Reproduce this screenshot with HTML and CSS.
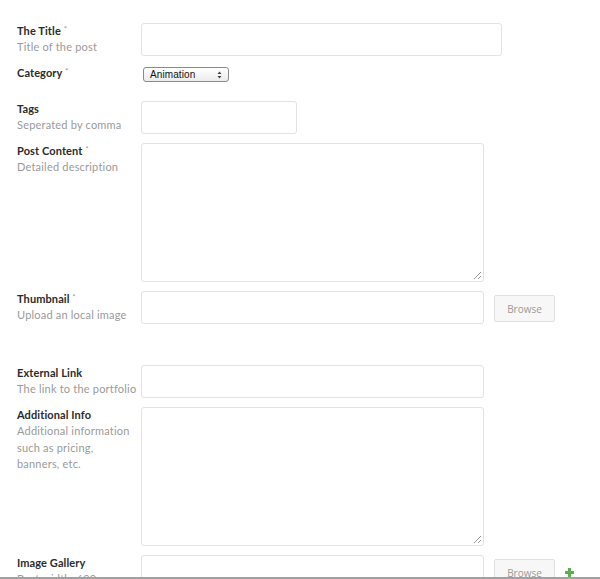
FILE: index.html
```html
<!DOCTYPE html>
<html>
<head>
<meta charset="utf-8">
<link rel="stylesheet" href="styles.css">
</head>
<body>
<form class="form">
  <div class="row">
    <div class="lbl"><div class="name">The Title <span class="req">*</span></div><div class="desc">Title of the post</div></div>
    <div class="field"><div class="input w-title"></div></div>
  </div>
  <div class="row row-cat">
    <div class="lbl"><div class="name">Category <span class="req">*</span></div></div>
    <div class="field"><div class="select"><span class="sel-text">Animation</span><svg class="arrows" width="5" height="8" viewBox="0 0 5 8"><path d="M2.5 0.5 L4.5 3 L0.5 3 Z M0.5 5 L4.5 5 L2.5 7.5 Z" fill="#444"/></svg></div></div>
  </div>
  <div class="row">
    <div class="lbl"><div class="name">Tags</div><div class="desc">Seperated by comma</div></div>
    <div class="field"><div class="input w-tags"></div></div>
  </div>
  <div class="row">
    <div class="lbl"><div class="name">Post Content <span class="req">*</span></div><div class="desc">Detailed description</div></div>
    <div class="field"><div class="input textarea"><span class="grip"></span></div></div>
  </div>
  <div class="row row-gap">
    <div class="lbl"><div class="name">Thumbnail <span class="req">*</span></div><div class="desc">Upload an local image</div></div>
    <div class="field"><div class="input w-main"></div><div class="btn">Browse</div></div>
  </div>
  <div class="row">
    <div class="lbl"><div class="name">External Link</div><div class="desc">The link to the portfolio</div></div>
    <div class="field"><div class="input w-main"></div></div>
  </div>
  <div class="row">
    <div class="lbl"><div class="name">Additional Info</div><div class="desc">Additional information<br>such as pricing,<br>banners, etc.</div></div>
    <div class="field"><div class="input textarea"><span class="grip"></span></div></div>
  </div>
  <div class="row">
    <div class="lbl"><div class="name">Image Gallery</div><div class="desc">Best width: 600px</div></div>
    <div class="field"><div class="input w-main"></div><div class="btn">Browse</div><span class="plus"></span></div>
  </div>
</form>
<div class="edge"></div>
</body>
</html>
```
FILE: styles.css
```css
html, body {
  margin: 0;
  padding: 0;
  background: #fff;
  overflow: hidden;
  height: 579px;
}
body {
  font-family: "Lato", "Open Sans", sans-serif;
  color: #333;
}
.form {
  padding: 23px 0 0 17px;
}
.row {
  display: flex;
  margin-bottom: 9px;
}
.row-cat {
  height: 27px;
}
.row-gap {
  margin-bottom: 41px;
}
.lbl {
  width: 124px;
  flex: none;
  font-size: 11px;
  line-height: 16px;
}
.name {
  font-weight: 700;
  color: #2b2b2b;
  letter-spacing: 0.1px;
  height: 16px;
}
.req {
  color: #999;
  font-weight: 400;
  font-size: 8px;
  line-height: 0;
  position: relative;
  top: -3px;
}
.desc {
  color: #9a9a9a;
  line-height: 16.5px;
  letter-spacing: 0.2px;
  white-space: nowrap;
}
.field {
  display: flex;
  align-items: flex-start;
}
.input {
  box-sizing: border-box;
  height: 33px;
  border: 1px solid #e3e3e3;
  border-radius: 3px;
  background: #fff;
}
.w-title { width: 361px; }
.w-tags { width: 156px; }
.w-main { width: 343px; }
.textarea {
  width: 343px;
  height: 139px;
  position: relative;
}
.grip {
  position: absolute;
  right: 2px;
  bottom: 2px;
  width: 7px;
  height: 7px;
  background: linear-gradient(135deg, transparent 45%, #999 45%, #999 55%, transparent 55%, transparent 72%, #999 72%, #999 82%, transparent 82%);
}
.select {
  box-sizing: border-box;
  margin: 2px 0 0 2px;
  width: 86px;
  height: 15px;
  border: 1px solid #8a8a8a;
  border-radius: 3px;
  background: linear-gradient(#fff, #ececec);
  display: flex;
  justify-content: space-between;
  align-items: center;
  padding: 0 6px 0 6px;
  font-family: "Liberation Sans", sans-serif;
  font-size: 10px;
  line-height: 13px;
  color: #111;
}
.sel-text {
  letter-spacing: 0.1px;
}
.arrows {
  display: block;
  flex: none;
}
.btn {
  box-sizing: border-box;
  margin: 4px 0 0 10px;
  width: 61px;
  height: 27px;
  border: 1px solid #e0e0e0;
  border-radius: 2px;
  background: #f7f7f7;
  color: #999;
  font-family: "Open Sans", sans-serif;
  font-size: 10px;
  display: flex;
  align-items: center;
  justify-content: center;
}
.plus {
  margin: 13px 0 0 10px;
  width: 9px;
  height: 9px;
  background:
    linear-gradient(#5cb04b, #5cb04b) center / 3px 9px no-repeat,
    linear-gradient(#5cb04b, #5cb04b) center / 9px 3px no-repeat;
}
.edge {
  position: absolute;
  left: 0;
  right: 0;
  top: 577px;
  height: 2px;
  background: #a0a0a0;
}
```
